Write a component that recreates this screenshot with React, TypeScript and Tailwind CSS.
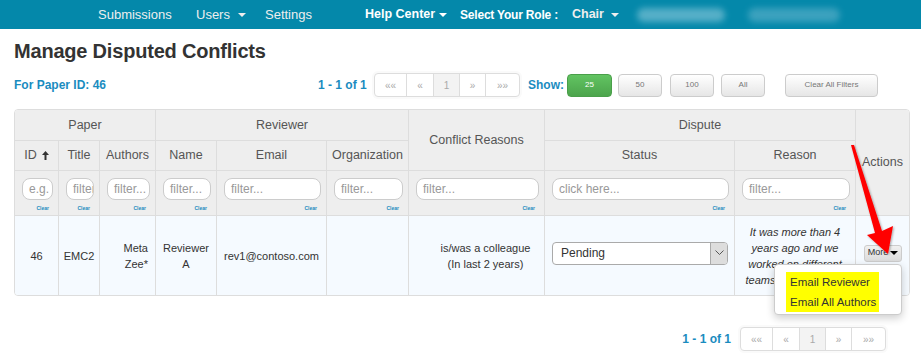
import React from "react";

const FONT = "font-['Liberation_Sans',Arial,Helvetica,sans-serif]";

function Caret({ color = "border-t-[#eeeeee]" }: { color?: string }) {
  return (
    <span
      className={`inline-block w-0 h-0 border-x-[4px] border-x-transparent border-t-[4px] ${color} align-middle ml-[4px]`}
    />
  );
}

function Pager() {
  const cells = [
    { t: "««", w: "w-[32px]" },
    { t: "«", w: "w-[27px]" },
    { t: "1", w: "w-[26px]", active: true },
    { t: "»", w: "w-[26px]" },
    { t: "»»", w: "w-[33px]" },
  ];
  return (
    <div className="flex h-[24px] rounded-[4px] border border-[#dddddd] bg-white overflow-hidden shadow-[0_0_0_2px_#fafafa]">
      {cells.map((c, i) => (
        <div
          key={i}
          className={`${c.w} flex items-center justify-center text-[10px] text-[#aaaaaa] ${
            i < cells.length - 1 ? "border-r border-[#dddddd]" : ""
          } ${c.active ? "bg-[#f3f3f3]" : ""}`}
        >
          {c.t}
        </div>
      ))}
    </div>
  );
}

function GreyBtn({ label, w }: { label: string; w: string }) {
  return (
    <div
      className={`${w} h-[23px] rounded-[4px] border border-[#cccccc] bg-gradient-to-b from-white to-[#e6e6e6] flex items-center justify-center text-[8px] text-[#777777]`}
    >
      {label}
    </div>
  );
}

function FilterCell({ ph, last }: { ph: string; last?: boolean }) {
  return (
    <td className={`${last ? "" : "border-r"} border-b border-[#dddddd] align-top pl-[7px] pr-[5px] pt-[7px]`}>
      <div className="h-[22px] rounded-[8px] border border-[#cccccc] bg-white flex items-center pl-[6px] overflow-hidden whitespace-nowrap text-[12px] text-[#999999]">
        {ph}
      </div>
      <div className="text-right pr-[4px] mt-[6px] text-[5px] leading-none font-bold text-[#1a8cbf]">Clear</div>
    </td>
  );
}

export default function App() {
  const th = "border-r border-b border-[#dddddd] font-normal text-[12.5px] text-[#555555] text-center align-middle";
  const td = "border-r border-[#dddddd] text-[11px] text-[#333333] align-middle leading-[16px]";
  return (
    <div className={`${FONT} relative w-[921px] h-[362px] overflow-hidden bg-white`}>
      {/* Navbar */}
      <div className="h-[29px] bg-[#0488aa] flex items-center pl-[98px] text-[13px] text-[#eeeeee] whitespace-nowrap">
        <div className="w-[98px]">Submissions</div>
        <div className="w-[69px]">
          Users <Caret />
        </div>
        <div className="w-[100px]">Settings</div>
        <div className="w-[95px] font-bold text-[12.5px] text-white">
          Help Center
          <Caret color="border-t-white" />
        </div>
        <div className="w-[112px] font-bold text-[12px] tracking-[-0.2px] text-white">Select Your Role :</div>
        <div className="w-[65px] font-bold text-[12.5px]">
          Chair <Caret />
        </div>
        <div className="w-[88px] h-[14px] rounded-full bg-[#6ab9cf] blur-[3px] opacity-80" />
        <div className="w-[23px]" />
        <div className="w-[92px] h-[14px] rounded-full bg-[#4aa8c3] blur-[3px] opacity-80" />
      </div>

      <div className="px-[14px]">
        <h1 className="mt-[10px] text-[20px] leading-[24px] font-bold text-[#333333] tracking-[-0.2px]">
          Manage Disputed Conflicts
        </h1>

        {/* Controls row */}
        <div className="mt-[10px] h-[24px] flex items-center">
          <div className="w-[304px] text-[12px] font-bold text-[#1a8cbf]">For Paper ID: 46</div>
          <div className="w-[56px] text-[12px] font-bold text-[#1a8cbf]">1 - 1 of 1</div>
          <Pager />
          <div className="ml-[8px] w-[39px] text-[12px] font-bold text-[#1a8cbf]">Show:</div>
          <div className="w-[45px] h-[23px] rounded-[4px] border border-[#4a9f4a] bg-gradient-to-b from-[#62c462] to-[#4ca44c] flex items-center justify-center text-[8px] text-white">
            25
          </div>
          <div className="ml-[6px]">
            <GreyBtn label="50" w="w-[44px]" />
          </div>
          <div className="ml-[8px]">
            <GreyBtn label="100" w="w-[44px]" />
          </div>
          <div className="ml-[7px]">
            <GreyBtn label="All" w="w-[44px]" />
          </div>
          <div className="ml-[20px]">
            <GreyBtn label="Clear All Filters" w="w-[93px]" />
          </div>
        </div>

        {/* Table */}
        <div className="mt-[12px] w-[896px] border border-[#dddddd] rounded-[4px]">
          <table className="w-[894px] table-fixed border-separate border-spacing-0">
            <colgroup>
              <col className="w-[44px]" />
              <col className="w-[41px]" />
              <col className="w-[56px]" />
              <col className="w-[61px]" />
              <col className="w-[110px]" />
              <col className="w-[82px]" />
              <col className="w-[136px]" />
              <col className="w-[190px]" />
              <col className="w-[121px]" />
              <col className="w-[53px]" />
            </colgroup>
            <thead className="bg-[#eeeeee]">
              <tr className="h-[31px]">
                <th colSpan={3} className={`${th} rounded-tl-[3px]`}>
                  Paper
                </th>
                <th colSpan={3} className={th}>
                  Reviewer
                </th>
                <th rowSpan={2} className={th}>
                  Conflict Reasons
                </th>
                <th colSpan={2} className={th}>
                  Dispute
                </th>
                <th rowSpan={3} className="border-b border-[#dddddd] font-normal text-[12.5px] text-[#555555] text-center align-middle rounded-tr-[3px]">
                  Actions
                </th>
              </tr>
              <tr className="h-[30px]">
                <th className={th}>
                  <span className="inline-flex items-center">
                    ID
                    <svg width="7" height="9" viewBox="0 0 7 9" className="ml-[5px]">
                      <polygon points="3.5,0 7,4 4.5,4 4.5,9 2.5,9 2.5,4 0,4" fill="#333" />
                    </svg>
                  </span>
                </th>
                <th className={th}>Title</th>
                <th className={th}>Authors</th>
                <th className={th}>Name</th>
                <th className={th}>Email</th>
                <th className={th}>Organization</th>
                <th className={th}>Status</th>
                <th className={th}>Reason</th>
              </tr>
              <tr className="h-[45px]">
                <FilterCell ph="e.g. >5" />
                <FilterCell ph="filter..." />
                <FilterCell ph="filter..." />
                <FilterCell ph="filter..." />
                <FilterCell ph="filter..." />
                <FilterCell ph="filter..." />
                <FilterCell ph="filter..." />
                <FilterCell ph="click here..." />
                <FilterCell ph="filter..." />
              </tr>
            </thead>
            <tbody className="bg-[#f5faff]">
              <tr className="h-[79px]">
                <td className={`${td} text-center rounded-bl-[3px]`}>46</td>
                <td className={`${td} text-center`}>EMC2</td>
                <td className={`${td} text-right pr-[7px]`}>
                  Meta
                  <br />
                  Zee*
                </td>
                <td className={`${td} text-center`}>
                  Reviewer
                  <br />A
                </td>
                <td className={`${td} text-center`}>rev1@contoso.com</td>
                <td className={td}></td>
                <td className={`${td} text-center pl-[18px]`}>
                  is/was a colleague
                  <br />
                  (In last 2 years)
                </td>
                <td className={`${td} px-[7px]`}>
                  <div className="h-[23px] w-[176px] mb-[5px] rounded-[4px] border border-[#aaaaaa] bg-white flex items-stretch overflow-hidden">
                    <div className="flex-1 flex items-center pl-[8px] text-[12px] text-[#333333]">Pending</div>
                    <div className="w-[17px] bg-[#dddddd] border-l border-[#aaaaaa] flex items-center justify-center">
                      <svg width="9" height="6" viewBox="0 0 9 6">
                        <polyline points="0.5,0.5 4.5,4.5 8.5,0.5" fill="none" stroke="#555" strokeWidth="1" />
                      </svg>
                    </div>
                  </div>
                </td>
                <td className={`${td} text-center italic whitespace-nowrap px-[2px]`}>
                  It was more than 4
                  <br />
                  years ago and we
                  <br />
                  worked on different
                  <br />
                  teams in the project.
                </td>
                <td className="align-middle pl-[8px] rounded-br-[3px]">
                  <div className="relative w-[38px] mb-[5px]">
                    <div className="h-[17px] w-[38px] rounded-[3px] border border-[#cccccc] bg-gradient-to-b from-[#f0f0f0] to-[#dcdcdc] flex items-center justify-center text-[9px] text-[#333333]">
                      More
                      <span className="inline-block w-0 h-0 border-x-[4px] border-x-transparent border-t-[4px] border-t-black ml-[2px]" />
                    </div>
                    <div className="absolute right-0 top-full mt-[2px] w-[128px] h-[51px] bg-white border border-[#cccccc] rounded-[4px] shadow-[0_3px_8px_rgba(0,0,0,0.2)] pt-[7px] pl-[11px] z-10">
                      <div className="w-[93px] bg-[#ffff00] text-[11.5px] text-[#333333] pl-[4px] whitespace-nowrap">
                        <div className="h-[20px] leading-[20px]">Email Reviewer</div>
                        <div className="h-[20px] leading-[20px]">Email All Authors</div>
                      </div>
                    </div>
                  </div>
                </td>
              </tr>
            </tbody>
          </table>
        </div>

        {/* Bottom pager */}
        <div className="mt-[31px] w-[872px] flex items-center justify-end">
          <div className="text-[12px] font-bold text-[#1a8cbf] mr-[9px]">1 - 1 of 1</div>
          <Pager />
        </div>
      </div>

      {/* Red annotation arrow */}
      <svg
        className="absolute inset-0 pointer-events-none"
        width="921"
        height="362"
        viewBox="0 0 921 362"
      >
        <defs>
          <filter id="sh" x="-20%" y="-20%" width="140%" height="140%">
            <feDropShadow dx="1" dy="1" stdDeviation="1" floodColor="#000" floodOpacity="0.35" />
          </filter>
        </defs>
        <polygon
          points="851,145 854,145 882,231 893,226 888,254 867,235 875,233"
          fill="#ff0000"
          filter="url(#sh)"
        />
      </svg>
    </div>
  );
}
